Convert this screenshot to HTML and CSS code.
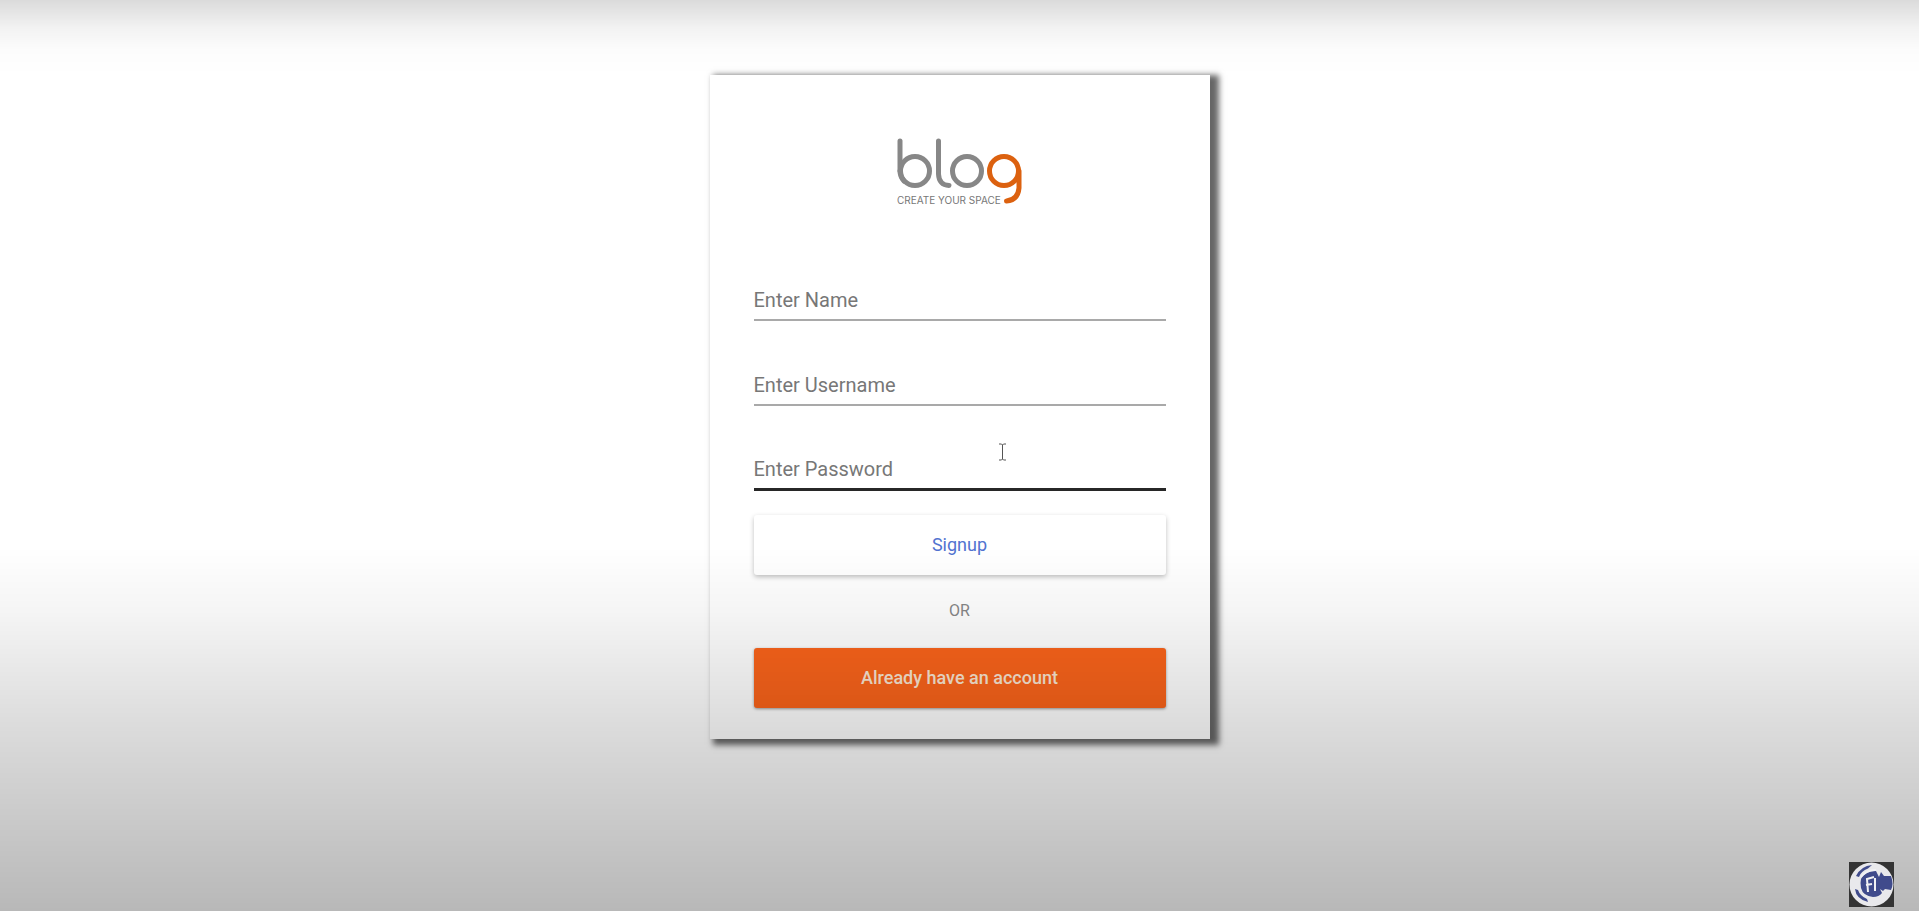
FILE: index.html
```
<!DOCTYPE html>
<html lang="en">
<head>
<meta charset="utf-8">
<meta name="viewport" content="width=device-width, initial-scale=1">
<title>Blog – Signup</title>
<link rel="stylesheet" href="styles.css">
</head>
<body>
<main class="page">
  <section class="card">
    <svg class="logo" width="125" height="70" viewBox="0 0 125 70" role="img" aria-label="blog, create your space">
      <g class="logo-grey">
        <circle cx="18" cy="33" r="14.5"/>
        <path d="M3 3V33"/>
        <path d="M3 33A15 15 0 0 0 7 43"/>
        <path d="M41.5 3V36Q42 47 52 47.5"/>
        <circle cx="70" cy="33" r="14.5"/>
      </g>
      <g class="logo-orange">
        <circle cx="107" cy="33" r="14.5"/>
        <path d="M122 33V50Q121 62 109.500 63"/>
      </g>
      <text class="logo-tagline" x="0" y="66">CREATE YOUR SPACE</text>
    </svg>
    <form class="form">
      <input class="field" type="text" name="name" placeholder="Enter Name" aria-label="Enter Name">
      <input class="field" type="text" name="username" placeholder="Enter Username" aria-label="Enter Username">
      <input class="field field-active" type="password" name="password" placeholder="Enter Password" aria-label="Enter Password">
      <button class="button button-signup" type="button">Signup</button>
      <p class="divider">OR</p>
      <button class="button button-login" type="button">Already have an account</button>
    </form>
    <svg class="cursor" width="9" height="18" viewBox="0 0 9 18" aria-hidden="true">
      <path d="M1 1H3.500L4.500 2L5.500 1H8M4.500 2V16M1 17H3.500L4.500 16L5.500 17H8"/>
    </svg>
  </section>
</main>
<div class="shade"></div>
<svg class="badge" width="45" height="45" viewBox="0 0 45 45" role="img" aria-label="Channel badge">
  <rect width="45" height="45" fill="#343434"/>
  <circle cx="22.500" cy="22.500" r="22" fill="#e9e9ec"/>
  <g fill="#404b8c">
    <path d="M7 14Q12 4 23 3L19 6.500Q12 9 10 15Z"/>
    <path d="M6 27Q7 37 19 40L18 37Q11 34 9 28Z"/>
    <path d="M12 17Q16 9 27 9L30 15L32 10L35 14L42 14Q45 22 42 28L36 27L34 29L31 27L33 31Q30 35 24 35Q14 34 12 26Q11 21 12 17Z"/>
  </g>
  <g fill="none" stroke="#f1f1f4" stroke-width="2">
    <path d="M12 15Q18 7 27 8"/>
    <path d="M19 30L18 17L25 15M17 23L23 22M26 16L26 29"/>
  </g>
</svg>
</body>
</html>
```
FILE: styles.css
```
* {
  box-sizing: border-box;
}

body {
  margin: 0;
  background: #fff;
  color: #757575;
  font-family: Roboto, "Liberation Sans", sans-serif;
}

.page {
  display: flex;
  justify-content: center;
  align-items: flex-start;
  min-height: 100vh;
  padding: 75px 16px 32px;
}

.card {
  position: relative;
  display: flex;
  flex-direction: column;
  width: 100%;
  max-width: 500px;
  padding: 63px 44px 31px;
  background: #fff;
  box-shadow: 6px 3px 6px 3px rgba(0, 0, 0, 0.6);
}

.logo {
  align-self: center;
}

.logo-grey,
.logo-orange {
  fill: none;
  stroke: #878787;
  stroke-width: 5;
  stroke-linecap: round;
}

.logo-orange {
  stroke: #dc610f;
}

.logo-tagline {
  fill: #777;
  font-family: Inter, Roboto, sans-serif;
  font-size: 10px;
}

.form {
  display: flex;
  flex-direction: column;
  padding-top: 72px;
}

.field {
  width: 100%;
  height: 41px;
  margin: 0 0 44px;
  padding: 0;
  border: 0;
  border-bottom: 2px solid #a9a9a9;
  border-radius: 0;
  outline: 0;
  background: transparent;
  color: #222;
  font: 400 20px/24px Roboto, "Liberation Sans", sans-serif;
}

.field::placeholder {
  color: #777;
  opacity: 1;
}

.field-active {
  margin-bottom: 24px;
  border-bottom: 3px solid #272727;
}

.button {
  width: 100%;
  height: 60px;
  padding: 0 0 1px;
  border: 0;
  border-radius: 3px;
  font: 500 18px/24px Roboto, "Liberation Sans", sans-serif;
}

.button-signup {
  background: #fff;
  color: #5273d0;
  font-weight: 400;
  box-shadow: 0 2px 5px rgba(0, 0, 0, 0.25);
}

.divider {
  margin: 24px 0 25px;
  color: #878787;
  font-size: 16px;
  line-height: 24px;
  text-align: center;
}

.button-login {
  background: #fb641b;
  color: #fae6d2;
  box-shadow: 0 1px 3px rgba(0, 0, 0, 0.4);
}

.cursor {
  position: absolute;
  left: 288px;
  top: 368px;
  fill: none;
  stroke: #555;
}

/* Darkened bands along the top and bottom of the window */
.shade {
  position: fixed;
  inset: 0;
  pointer-events: none;
  background:
    linear-gradient(rgba(0, 0, 0, 0.14), rgba(0, 0, 0, 0.05) 28px, rgba(0, 0, 0, 0.01) 50px, transparent 75px),
    linear-gradient(transparent 60%, rgba(0, 0, 0, 0.04) 67%, rgba(0, 0, 0, 0.14) 80%, rgba(0, 0, 0, 0.28));
}

.badge {
  position: fixed;
  right: 25px;
  bottom: 4px;
}
```
